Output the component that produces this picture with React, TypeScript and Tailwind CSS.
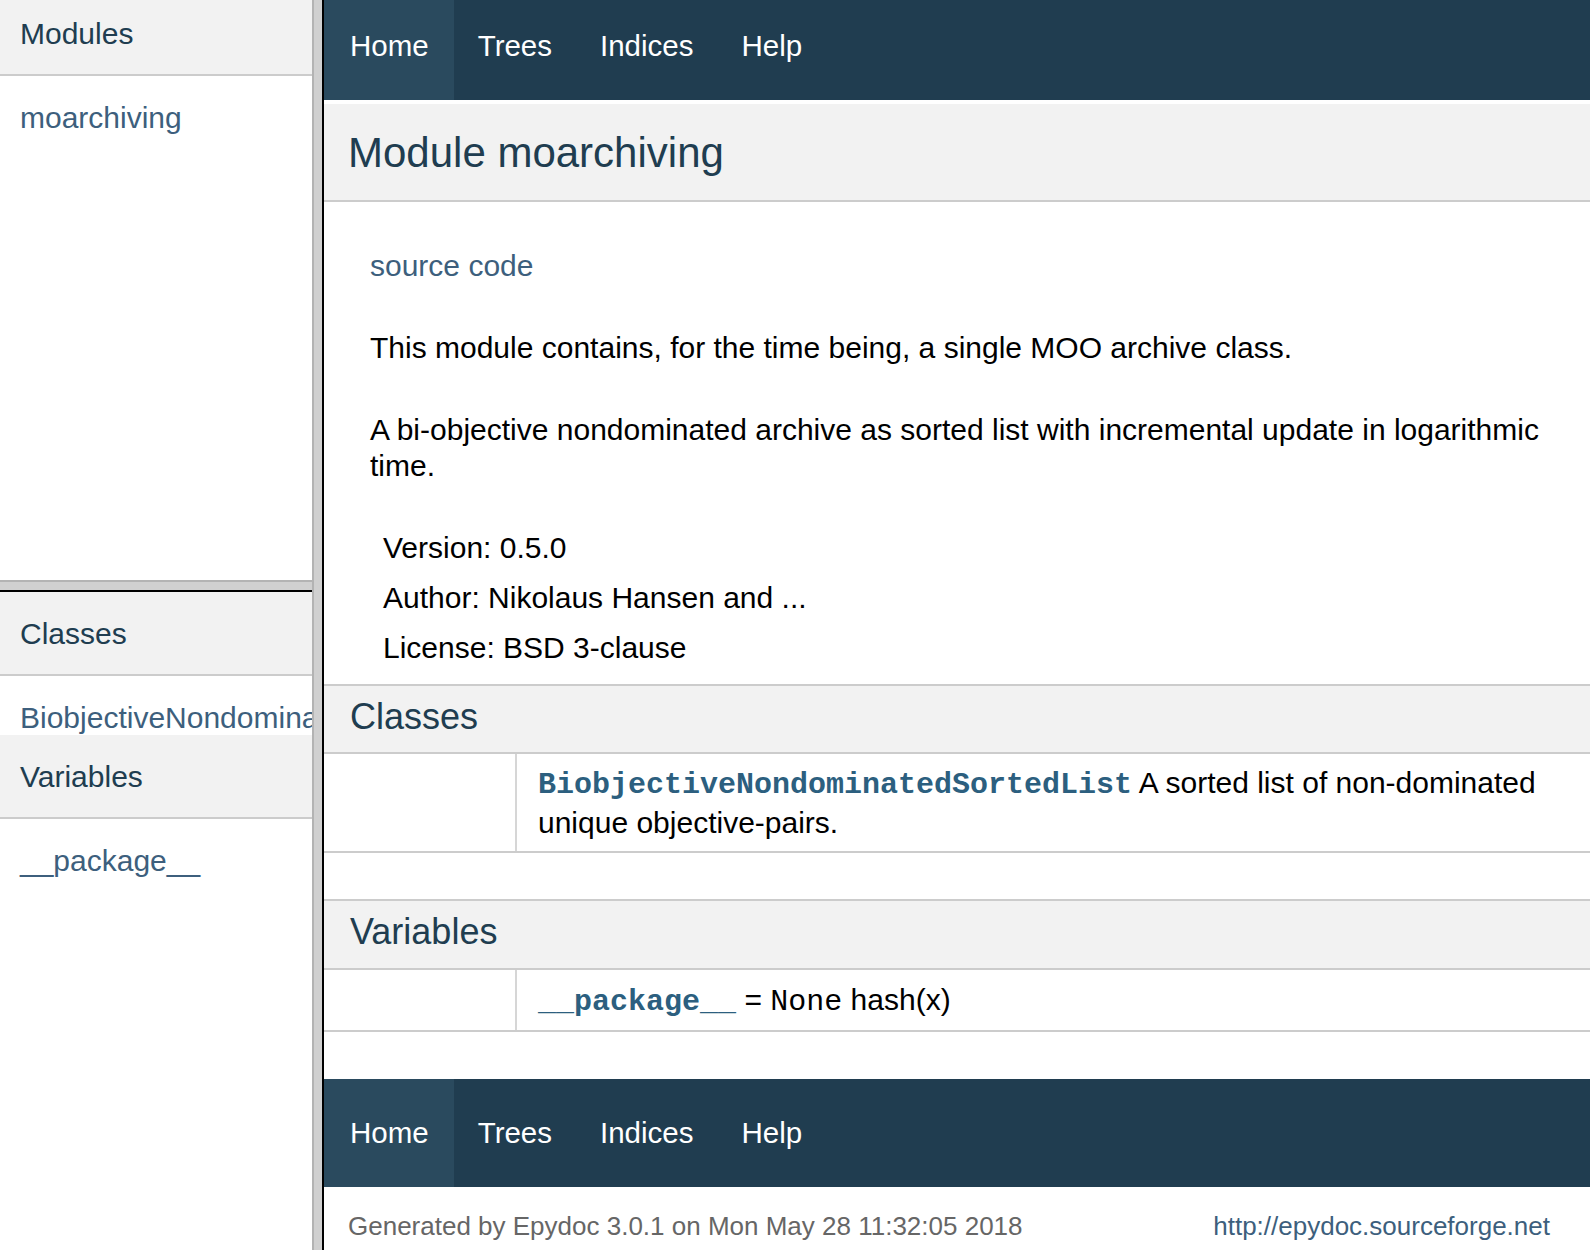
import React from "react";

const NAV_ITEMS = ["Home", "Trees", "Indices", "Help"];

function NavBar({ tall }: { tall?: boolean }) {
  return (
    <div
      className={
        tall
          ? "flex h-[108px] bg-[#203d50] text-[29.5px] leading-[34px] text-white"
          : "flex h-[100px] bg-[#203d50] text-[29.5px] leading-[34px] text-white"
      }
    >
      {NAV_ITEMS.map((item, i) => (
        <div
          key={item}
          className={
            i === 0
              ? "flex items-center bg-[#2a4a5e] pl-[26px] pr-[25px]"
              : "flex items-center px-[24px]"
          }
        >
          <span className={tall ? "" : "pb-[8px]"}>{item}</span>
        </div>
      ))}
    </div>
  );
}

function SideHeader({ label, first }: { label: string; first?: boolean }) {
  return (
    <div
      className={
        first
          ? "h-[76px] border-b-2 border-[#cccccc] bg-[#f2f2f2] pl-5 pt-[16px] text-[30px] leading-[35px] text-[#203d50]"
          : "h-[84px] border-b-2 border-[#cccccc] bg-[#f2f2f2] pl-5 pt-6 text-[30px] leading-[35px] text-[#203d50]"
      }
    >
      {label}
    </div>
  );
}

function SideLink({ label }: { label: string }) {
  return (
    <div className="overflow-hidden whitespace-nowrap pl-5 pt-6 text-[30px] leading-[35px] text-[#3d5f7d]">
      {label}
    </div>
  );
}

export default function App() {
  return (
    <div className="flex h-[1250px] w-[1590px] overflow-hidden bg-white font-['Liberation_Sans',Arial,sans-serif]">
      {/* left frames */}
      <aside className="flex w-[312px] shrink-0 flex-col">
        <div className="h-[580px] overflow-hidden">
          <SideHeader label="Modules" first />
          <SideLink label="moarchiving" />
        </div>
        <div className="h-[12px] border-t-2 border-b-2 border-t-[#b3b3b3] border-b-black bg-[#d0d0d0]" />
        <div className="flex-1 overflow-hidden">
          <SideHeader label="Classes" />
          <div className="h-[59px] overflow-hidden">
            <SideLink label="BiobjectiveNondominatedSortedList" />
          </div>
          <SideHeader label="Variables" />
          <SideLink label="__package__" />
        </div>
      </aside>

      {/* frame border */}
      <div className="w-[12px] shrink-0 border-l-2 border-r-2 border-l-[#b3b3b3] border-r-black bg-[#d0d0d0]" />

      {/* main frame */}
      <main className="flex min-w-0 flex-1 flex-col">
        <NavBar />

        <div className="mt-[4px] h-[98px] border-b-2 border-[#cccccc] bg-[#f2f2f2] pl-6 pt-[25px] text-[42px] leading-[48px] text-[#203d50]">
          Module moarchiving
        </div>

        <div className="pl-[46px] pr-[30px] pt-[46px] text-[30px] leading-[35px] text-black">
          <div className="text-[#3d5f7d]">source code</div>
          <p className="mt-[47px]">
            This module contains, for the time being, a single MOO archive class.
          </p>
          <p className="mt-[47px] leading-[35.5px]">
            A bi-objective nondominated archive as sorted list with incremental update in logarithmic
            time.
          </p>
          <div className="mt-[47px] flex flex-col gap-[15px] pl-[13px]">
            <div>Version: 0.5.0</div>
            <div>Author: Nikolaus Hansen and ...</div>
            <div>License: BSD 3-clause</div>
          </div>
        </div>

        {/* Classes */}
        <div className="mt-[19px] border-y-2 border-[#cccccc] bg-[#f2f2f2] pl-[26px] pt-[10px] pb-[14px] text-[36px] leading-[42px] text-[#203d50]">
          Classes
        </div>
        <div className="flex border-b-2 border-[#cccccc]">
          <div className="w-[193px] shrink-0 border-r-2 border-[#d6d6d6]" />
          <div className="pl-[21px] pr-[20px] pt-[10px] pb-[10px] text-[30px] leading-[37px] text-black">
            <span className="font-['Liberation_Mono','Courier_New',monospace] font-bold text-[#2c5f7f]">
              BiobjectiveNondominatedSortedList
            </span>{" "}
            A sorted list of non-dominated unique objective-pairs.
          </div>
        </div>

        {/* Variables */}
        <div className="mt-[46px] border-y-2 border-[#cccccc] bg-[#f2f2f2] pl-[26px] pt-[10px] pb-[15px] text-[36px] leading-[42px] text-[#203d50]">
          Variables
        </div>
        <div className="flex border-b-2 border-[#cccccc]">
          <div className="w-[193px] shrink-0 border-r-2 border-[#d6d6d6]" />
          <div className="pl-[21px] pr-[20px] pt-[11px] pb-[9px] text-[30px] leading-[37px] text-black">
            <span className="font-['Liberation_Mono','Courier_New',monospace] font-bold text-[#2c5f7f]">
              __package__
            </span>{" "}
            = <span className="font-['Liberation_Mono','Courier_New',monospace]">None</span> hash(x)
          </div>
        </div>

        <div className="mt-[47px]">
          <NavBar tall />
        </div>

        <div className="flex justify-between pl-6 pr-[40px] pt-[24px] text-[26px] leading-[30px]">
          <span className="text-[#666666]">Generated by Epydoc 3.0.1 on Mon May 28 11:32:05 2018</span>
          <span className="text-[#3d5f7d]">http://epydoc.sourceforge.net</span>
        </div>
      </main>
    </div>
  );
}
